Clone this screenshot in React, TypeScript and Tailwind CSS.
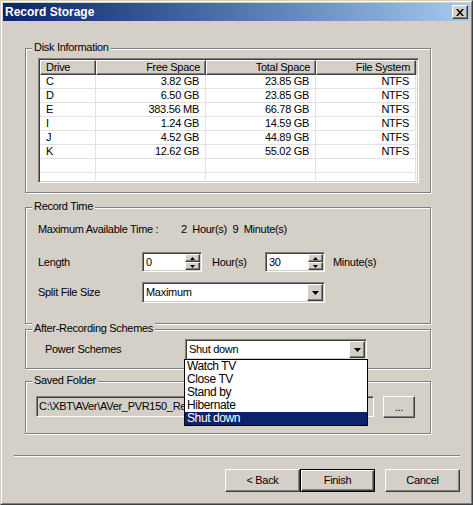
import React from "react";

const sunken =
  "border border-t-[#808080] border-l-[#808080] border-b-white border-r-white shadow-[inset_1px_1px_0_#404040,inset_-1px_-1px_0_#d4d0c8]";
const raised =
  "border border-t-white border-l-white border-b-[#404040] border-r-[#404040] shadow-[inset_-1px_-1px_0_#808080]";

const drives = [
  ["C", "3.82 GB", "23.85 GB", "NTFS"],
  ["D", "6.50 GB", "23.85 GB", "NTFS"],
  ["E", "383.56 MB", "66.78 GB", "NTFS"],
  ["I", "1.24 GB", "14.59 GB", "NTFS"],
  ["J", "4.52 GB", "44.89 GB", "NTFS"],
  ["K", "12.62 GB", "55.02 GB", "NTFS"],
  ["", "", "", ""],
  ["", "", "", ""],
];

const colWidths = ["w-[56px]", "w-[110px]", "w-[110px]", "w-[100px]"];

const powerOptions = ["Watch TV", "Close TV", "Stand by", "Hibernate", "Shut down"];

type GroupBoxProps = {
  label: string;
  className?: string;
  children: React.ReactNode;
};

const GroupBox = ({ label, className, children }: GroupBoxProps) => {
  return (
    <div
      className={`relative ml-[11px] w-[406px] border border-[#808080] shadow-[inset_1px_1px_0_#fff,1px_1px_0_#fff] ${className ?? ""}`}
    >
      <span className="absolute -top-[8px] left-[6px] bg-[#d4d0c8] px-[2px] leading-[13px]">
        {label}
      </span>
      {children}
    </div>
  );
};

const ArrowDown = ({ w = 7, h = 4 }: { w?: number; h?: number }) => (
  <svg width={w} height={h} viewBox={`0 0 ${w} ${h}`}>
    <path d={`M0 0H${w}L${w / 2} ${h}Z`} fill="#000" />
  </svg>
);

const ArrowUp = ({ w = 5, h = 3 }: { w?: number; h?: number }) => (
  <svg width={w} height={h} viewBox={`0 0 ${w} ${h}`}>
    <path d={`M0 ${h}H${w}L${w / 2} 0Z`} fill="#000" />
  </svg>
);

const Spinner = ({ value }: { value: string }) => {
  return (
    <div className={`flex h-[20px] w-[60px] bg-white p-px ${sunken}`}>
      <span className="flex-1 pl-[2px] leading-[16px]">{value}</span>
      <div className="flex w-[15px] flex-col">
        <div className={`flex h-[8px] items-center justify-center bg-[#d4d0c8] ${raised}`}>
          <ArrowUp />
        </div>
        <div className={`flex h-[8px] items-center justify-center bg-[#d4d0c8] ${raised}`}>
          <ArrowDown w={5} h={3} />
        </div>
      </div>
    </div>
  );
};

type ComboProps = {
  value: string;
  width: string;
  open?: boolean;
};

const Combo = ({ value, width, open }: ComboProps) => {
  return (
    <div className={`relative flex h-[21px] ${width} bg-white p-px ${sunken}`}>
      <span className="flex-1 pl-[2px] leading-[17px]">{value}</span>
      <div className={`flex w-[16px] items-center justify-center bg-[#d4d0c8] ${raised}`}>
        <ArrowDown />
      </div>
      {open && (
        <div className="absolute left-[-2px] top-full z-10 w-[calc(100%+4px)] border border-black bg-white text-[12px] tracking-[-0.4px]">
          {powerOptions.map((opt) => (
            <div
              key={opt}
              className={`h-[13px] pl-[2px] leading-[13px] ${
                opt === "Shut down" ? "bg-[#0a246a] text-white" : ""
              }`}
            >
              {opt}
            </div>
          ))}
        </div>
      )}
    </div>
  );
};

const DiskList = () => {
  const headers = ["Drive", "Free Space", "Total Space", "File System"];
  return (
    <div className={`h-[125px] w-[381px] overflow-hidden bg-white p-px ${sunken}`}>
      <div className="flex h-[15px] bg-[#d4d0c8]">
        {headers.map((h, i) => (
          <div
            key={h}
            className={`${colWidths[i]} ${raised} leading-[12px] ${
              i === 0 ? "pl-[5px] text-left" : "pr-[5px] text-right"
            }`}
          >
            {h}
          </div>
        ))}
      </div>
      {drives.map((row, r) => (
        <div key={r} className="flex h-[14px] border-b border-[#e2e1e4]">
          {row.map((cell, i) => (
            <div
              key={i}
              className={`${colWidths[i]} border-r border-[#e2e1e4] leading-[13px] ${
                i === 0 ? "pl-[6px] text-left" : "pr-[6px] text-right"
              }`}
            >
              {cell}
            </div>
          ))}
        </div>
      ))}
    </div>
  );
};

const Button = ({ label, isDefault }: { label: string; isDefault?: boolean }) => {
  return (
    <button
      className={`h-[23px] w-[75px] bg-[#d4d0c8] leading-[19px] ${
        isDefault
          ? "border border-black shadow-[inset_1px_1px_0_#fff,inset_-1px_-1px_0_#404040,inset_-2px_-2px_0_#808080]"
          : raised
      }`}
    >
      {label}
    </button>
  );
};

export default function App() {
  return (
    <div className="h-[505px] w-[473px] select-none border border-t-[#d4d0c8] border-l-[#d4d0c8] border-b-[#404040] border-r-[#404040] bg-[#d4d0c8] font-['Liberation_Sans',Arial,sans-serif] text-[11px] tracking-[-0.3px] text-black">
      <div className="flex h-full flex-col border border-t-white border-l-white border-b-[#808080] border-r-[#808080] p-px">
        {/* title bar */}
        <div className="flex h-[18px] items-center justify-between bg-linear-to-r from-[#0a246a] to-[#a6caf0] pl-[2px] pr-[2px]">
          <span className="text-[12px] font-bold tracking-normal text-white">Record Storage</span>
          <div className={`flex h-[14px] w-[16px] items-center justify-center bg-[#d4d0c8] ${raised}`}>
            <svg width="8" height="7" viewBox="0 0 8 7">
              <path d="M0 0h2l2 2.5 2-2.5h2l-3 3.5 3 3.5h-2l-2-2.5-2 2.5h-2l3-3.5z" fill="#000" />
            </svg>
          </div>
        </div>

        <div className="flex flex-1 flex-col pl-[11px] pt-[27px]">
          <GroupBox label="Disk Information" className="h-[145px] pl-[12px] pt-[9px]">
            <DiskList />
          </GroupBox>

          <GroupBox label="Record Time" className="mt-[14px] pb-[20px] pl-[12px] pt-[14px]">
            <div className="flex h-[14px] items-center">
              <span className="w-[143px]">Maximum Available Time :</span>
              <span className="whitespace-pre">2  Hour(s)  9  Minute(s)</span>
            </div>
            <div className="mt-[16px] flex h-[20px] items-center">
              <span className="w-[104px]">Length</span>
              <Spinner value="0" />
              <span className="ml-[10px] w-[53px]">Hour(s)</span>
              <Spinner value="30" />
              <span className="ml-[8px]">Minute(s)</span>
            </div>
            <div className="mt-[10px] flex h-[21px] items-center">
              <span className="w-[104px]">Split File Size</span>
              <Combo value="Maximum" width="w-[183px]" />
            </div>
          </GroupBox>

          <GroupBox label="After-Recording Schemes" className="z-10 mt-[5px] pb-[8px] pl-[19px] pt-[9px]">
            <div className="flex h-[21px] items-center">
              <span className="w-[140px]">Power Schemes</span>
              <Combo value="Shut down" width="w-[182px]" open />
            </div>
          </GroupBox>

          <GroupBox label="Saved Folder" className="mt-[12px] pb-[16px] pl-[10px] pr-[15px] pt-[14px]">
            <div className="flex h-[21px] items-center">
              <div className={`h-[21px] flex-1 bg-[#d4d0c8] p-px pl-[2px] leading-[17px] ${sunken}`}>
                <div className="w-[145px] overflow-hidden whitespace-nowrap">
                  {"C:\\XBT\\AVer\\AVer_PVR150_Recordings"}
                </div>
              </div>
              <button className={`ml-[9px] h-[22px] w-[32px] bg-[#d4d0c8] leading-[16px] ${raised}`}>
                ...
              </button>
            </div>
          </GroupBox>

          <div className="mt-[21px] h-[2px] w-[446px] border-t border-b border-t-[#808080] border-b-white" />

          <div className="mt-[12px] flex w-[446px] justify-end">
            <Button label="< Back" />
            <Button label="Finish" isDefault />
            <div className="ml-[10px]">
              <Button label="Cancel" />
            </div>
          </div>
        </div>
      </div>
    </div>
  );
}
